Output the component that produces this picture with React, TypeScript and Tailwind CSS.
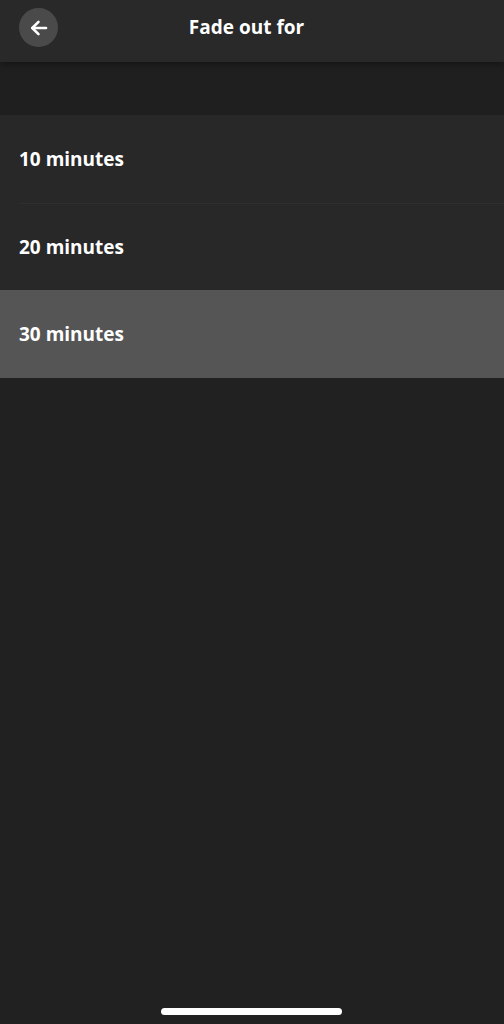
import { useState } from "react";

const options = ["10 minutes", "20 minutes", "30 minutes"];

export default function App() {
  const [selected, setSelected] = useState(2);

  return (
    <div className="w-[504px] h-[1024px] bg-[#212121] flex flex-col relative overflow-hidden" style={{ fontFamily: '"Open Sans", "Noto Sans", sans-serif' }}>
      <header className="h-[62px] bg-[#292929] flex items-start pt-[8px] px-[19px] relative z-10 shadow-[0_2px_6px_rgba(0,0,0,0.35)]">
        <button className="w-[39px] h-[39px] rounded-full bg-[#4a4a4a] flex items-center justify-center text-white">
          <svg width="20" height="20" viewBox="0 0 20 20" fill="none" stroke="currentColor" strokeWidth="2.6" strokeLinecap="round" strokeLinejoin="round">
            <path d="M17 10H3.5" />
            <path d="M9.5 3.8L3.3 10l6.2 6.2" />
          </svg>
        </button>
        <h1 className="flex-1 h-[39px] leading-[39px] text-center pr-[50px] text-white text-[19px] font-bold">Fade out for</h1>
      </header>

      <div className="h-[53px] bg-[#1f1f1f]" />

      <div className="flex flex-col">
        {options.map((label, i) => (
          <button
            key={label}
            onClick={() => setSelected(i)}
            className={`h-[87.6px] flex flex-col text-left ${selected === i ? "bg-[#555555]" : "bg-[#282828]"}`}
          >
            {i > 0 && selected !== i && <div className="ml-[19px] h-px bg-[#2f2f2f]" />}
            <span className="flex-1 flex items-center pl-[19px] text-white text-[19px] font-bold">{label}</span>
          </button>
        ))}
      </div>

      <div className="absolute bottom-[9px] left-[161px] w-[181px] h-[7px] rounded-full bg-white" />
    </div>
  );
}
